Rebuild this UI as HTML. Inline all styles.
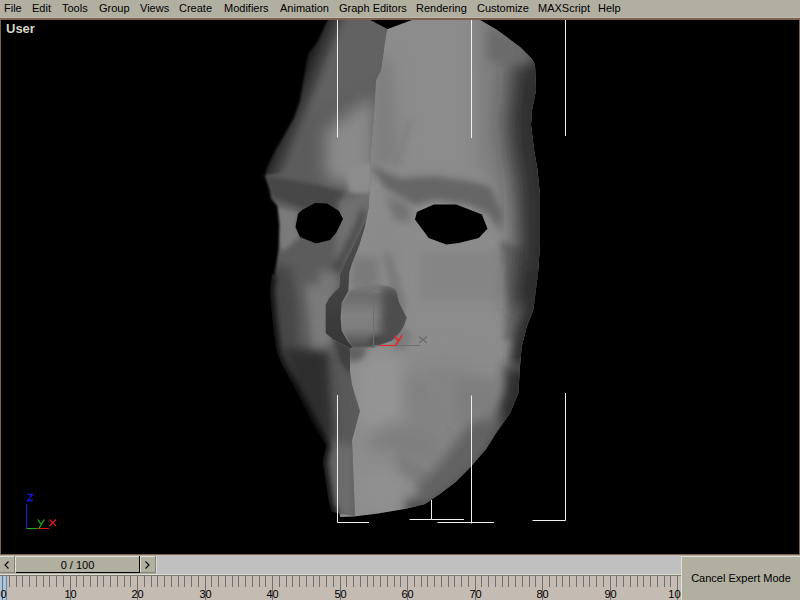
<!DOCTYPE html>
<html><head><meta charset="utf-8">
<style>
html,body{margin:0;padding:0;width:800px;height:600px;overflow:hidden;background:#000;}
body{position:relative;font-family:"Liberation Sans",sans-serif;font-size:11px;color:#000;}
.abs{position:absolute;}
#menu{left:0;top:0;width:800px;height:18px;background:#b1afa0;box-shadow:inset 0 -1px 0 #bdb8ab;}
#menu span{position:absolute;top:2px;font-size:11px;line-height:13px;white-space:nowrap;}
#vpborder{left:0;top:18px;width:800px;height:538px;background:#7c6050;}
#vp{left:1px;top:20px;width:798px;height:534px;background:#000;overflow:hidden;}
#user{left:5px;top:1px;font-weight:bold;font-size:13px;color:#d8d6c4;}
</style></head><body>
<div id="menu" class="abs">
<span style="left:4px">File</span>
<span style="left:32px">Edit</span>
<span style="left:62px">Tools</span>
<span style="left:99px">Group</span>
<span style="left:140px">Views</span>
<span style="left:179px">Create</span>
<span style="left:224px">Modifiers</span>
<span style="left:280px">Animation</span>
<span style="left:339px">Graph Editors</span>
<span style="left:416px">Rendering</span>
<span style="left:477px">Customize</span>
<span style="left:538px">MAXScript</span>
<span style="left:598px">Help</span>
</div>
<div id="vpborder" class="abs"></div>
<div id="vp" class="abs">
<div id="user" class="abs">User</div>
</div>
<svg class="abs" style="left:0;top:0" width="800" height="600" viewBox="0 0 800 600">
<defs>
<filter id="b1" filterUnits="userSpaceOnUse" x="0" y="0" width="800" height="600"><feGaussianBlur stdDeviation="1"/></filter>
<filter id="b2" filterUnits="userSpaceOnUse" x="0" y="0" width="800" height="600"><feGaussianBlur stdDeviation="2"/></filter>
<filter id="b3" filterUnits="userSpaceOnUse" x="0" y="0" width="800" height="600"><feGaussianBlur stdDeviation="3"/></filter>
<filter id="b4" filterUnits="userSpaceOnUse" x="0" y="0" width="800" height="600"><feGaussianBlur stdDeviation="4"/></filter>
<filter id="b5" filterUnits="userSpaceOnUse" x="0" y="0" width="800" height="600"><feGaussianBlur stdDeviation="5"/></filter>
<filter id="b6" filterUnits="userSpaceOnUse" x="0" y="0" width="800" height="600"><feGaussianBlur stdDeviation="6"/></filter>
<filter id="b8" filterUnits="userSpaceOnUse" x="0" y="0" width="800" height="600"><feGaussianBlur stdDeviation="8"/></filter>
<filter id="b10" filterUnits="userSpaceOnUse" x="0" y="0" width="800" height="600"><feGaussianBlur stdDeviation="10"/></filter>
<filter id="b12" filterUnits="userSpaceOnUse" x="0" y="0" width="800" height="600"><feGaussianBlur stdDeviation="12"/></filter>
<linearGradient id="gR" x1="0" x2="1" y1="0" y2="0"><stop offset="0" stop-color="#8c8c8c" stop-opacity="0"/><stop offset="0.3" stop-color="#7a7a7a" stop-opacity="0.6"/><stop offset="1" stop-color="#505050" stop-opacity="0.8"/></linearGradient>
<clipPath id="clipC"><path d="M387.7,29 L412,20 L480,20 L497,30 L520,47 L532,59 L535,65 L536,90 L532,110 L531,125 L534,150 L537.5,170 L540,195 L540,245 L538.3,270 L533.3,310 L526.7,326.7 L521.7,346.7 L520,366.7 L518.3,393.3 L510,413.3 L496,433 L486,449 L470,467.5 L455,482.5 L440,493.75 L425,504 L406,508.75 L378,513.5 L354,516.5 L340,517 L310,300 L360,30 Z"/></clipPath>
<clipPath id="clipL"><path d="M328,20 L370,20 L387,29 L385,42 L381,70 L376,80 L374,115 L371,150 L370,188 L367.5,212 L366.7,217.5 L353.9,245 L346.5,259.7 L340,274.4 L339.2,287.2 L333.7,292.8 L328.7,298.5 L325.4,305 L325.4,333 L333,339.7 L350,348.3 L350,360 L350,372 L352,385 L360,411 L352,440 L355,516 L337,513 L331,511 L328.7,501 L322.6,462 L326.3,445 L315,427 L309,415 L302,402 L296,390 L289,377 L282,365 L277,352 L275,340 L272,315 L270,290 L272,275 L276,250 L277,225 L275,207 L269,200 L267,190 L262,175 L264,167 L272,150 L282,133 L291,117 L297,100 L300,82 L304,60 L306,52 L315,40 Z"/></clipPath>
<clipPath id="clipN"><path d="M341.7,302.8 L348,294 L348.3,291 C360,284 385,282 396,290 L398.7,301.7 L406.7,317.7 L404,325.7 L400,332.3 L392,340.3 L373.3,347 L352.5,347.3 L348,341.8 L341.7,331 L340.6,318 Z"/></clipPath>
<clipPath id="clipLx"><path d="M200,20 L370,20 L387,29 L385,42 L381,70 L376,80 L374,115 L371,150 L370,188 L367.5,212 L366.7,217.5 L353.9,245 L346.5,259.7 L340,274.4 L339.2,287.2 L333.7,292.8 L328.7,298.5 L325.4,305 L325.4,333 L333,339.7 L350,348.3 L350,360 L350,372 L352,385 L360,411 L352,440 L355,516 L355,554 L200,554 Z"/></clipPath>
</defs>
<!-- central piece -->
<g clip-path="url(#clipC)">
<rect x="300" y="0" width="260" height="540" fill="#8c8c8c"/>
<g filter="url(#b12)">
<ellipse cx="445" cy="410" rx="45" ry="50" fill="#848484"/>
</g>
<linearGradient id="gV" x1="0" x2="0" y1="15" y2="240" gradientUnits="userSpaceOnUse"><stop offset="0" stop-color="#fff"/><stop offset="0.6" stop-color="#fff"/><stop offset="1" stop-color="#000"/></linearGradient>
<mask id="mV" maskUnits="userSpaceOnUse" x="0" y="0" width="800" height="600"><rect x="455" y="15" width="90" height="225" fill="url(#gV)"/></mask>
<rect x="455" y="15" width="90" height="225" fill="url(#gR)" mask="url(#mV)"/>
<g filter="url(#b8)">
<path d="M358,355 L400,355 L400,420 L360,430 Z" fill="#949494"/>
<path d="M405,372 L428,392 L422,425 L410,400 Z" fill="#808080"/>
<path d="M372,432 L400,424 L438,440 L436,466 L400,452 L368,448 Z" fill="#7e7e7e"/>
<ellipse cx="380" cy="490" rx="25" ry="20" fill="#909090"/>
<path d="M372,60 L392,60 L400,165 L372,175 Z" fill="#7e7e7e"/>
</g>
<g filter="url(#b5)">
<path d="M370,218 L392,224 L408,262 L370,262 Z" fill="#8a8a8a"/>
<path d="M385,195 L408,205 L412,222 L395,220 Z" fill="#707070"/>
<path d="M420,250 L500,250 L500,300 L420,300 Z" fill="#858585"/>
<path d="M397,449 L429,470 L429,492 L397,470 Z" fill="#7c7c7c"/>
</g>
<g filter="url(#b3)">
<path d="M408,120 L414,120 L396,172 L390,172 Z" fill="#808080"/>
<path d="M372,162 L400,169 L440,167 L480,172 L495,182 L470,178 L435,177 L400,179 Z" fill="#888888"/>
<path d="M370,165 L400,178 L435,176 L470,181 L490,187 L502,212 L500,232 L490,215 L470,205 L435,200 L415,205 L385,188 Z" fill="#666666"/>
<path d="M500,240 L526,250 L527,290 L520,340 L503,340 L508,300 Z" fill="#6a6a6a"/>
<path d="M400,325 L412,335 L405,350 L392,348 Z" fill="#7a7a7a"/>
<path d="M345,345 L368,347 L362,360 L348,362 Z" fill="#606060"/>
</g>
<path d="M532,59 L535,65 L536,90 L532,110 L531,125 L534,150 L537.5,170 L540,195 L540,245 L538.3,270 L533.3,310" fill="none" stroke="#2e2e2e" stroke-width="44" filter="url(#b10)"/>
<path d="M538.3,270 L533.3,310 L526.7,326.7 L521.7,346.7 L520,366.7" fill="none" stroke="#2e2e2e" stroke-width="20" filter="url(#b5)"/>
<path d="M520,366.7 L518.3,393.3 L510,413.3 L496,433" fill="none" stroke="#2e2e2e" stroke-width="30" filter="url(#b6)"/>
<path d="M500,425 L486,449 L470,467.5 L455,482.5 L440,493.75 L425,504 L406,508.75" fill="none" stroke="#505050" stroke-width="16" filter="url(#b5)"/>
<path d="M505,415 L470,470 L425,505 L415,490 L450,450 L478,412 Z" fill="#626262" filter="url(#b6)"/>
<path d="M455,378 L500,378 L495,420 L455,420 Z" fill="#7e7e7e" filter="url(#b6)"/>
<path d="M488,25 L520,45 L532,62 L488,62 Z" fill="#6a6a6a" filter="url(#b5)"/>
<path d="M352,255 L378,258 L380,290 L350,288 Z" fill="#7a7a7a" filter="url(#b4)"/>
<!-- nose -->
<linearGradient id="gN" x1="0" x2="0" y1="284" y2="348" gradientUnits="userSpaceOnUse"><stop offset="0" stop-color="#7a7a7a"/><stop offset="0.2" stop-color="#6c6c6c"/><stop offset="0.5" stop-color="#828282"/><stop offset="0.72" stop-color="#7a7a7a"/><stop offset="1" stop-color="#4a4a4a"/></linearGradient>
<linearGradient id="gNR" x1="375" x2="407" y1="0" y2="0" gradientUnits="userSpaceOnUse"><stop offset="0" stop-color="#555" stop-opacity="0"/><stop offset="1" stop-color="#4e4e4e" stop-opacity="1"/></linearGradient>
<g filter="url(#b3)">
<path d="M382,252 L392,255 L406,300 L403,320 L394,306 Z" fill="#7a7a7a"/>
</g>
<path d="M341.7,302.8 L348,294 L348.3,291 C360,284 385,282 396,290 L398.7,301.7 L406.7,317.7 L404,325.7 L400,332.3 L392,340.3 L373.3,347 L352.5,347.3 L348,341.8 L341.7,331 L340.6,318 Z" fill="url(#gN)" filter="url(#b1)"/>
<g clip-path="url(#clipN)"><ellipse cx="383" cy="341" rx="14" ry="6" fill="#484848" filter="url(#b2)"/><path d="M384,286 L404,292 L412,317.7 L408,330 L400,342 L384,352 L380,330 L382,305 Z" fill="#4e4e4e" filter="url(#b4)"/></g>
<linearGradient id="gB" x1="0" x2="0" y1="190" y2="348" gradientUnits="userSpaceOnUse"><stop offset="0" stop-color="#555"/><stop offset="0.5" stop-color="#474747"/><stop offset="1" stop-color="#363636"/></linearGradient>
<path d="M370,188 L367.5,212 L366.7,217.5 L353.9,245 L346.5,259.7 L340,274.4 L339.2,287.2 L333.7,292.8 L328.7,298.5 L325.4,305 L325.4,333 L333,339.7 L350,348.3 L352.5,347.3 L348,341.8 L341.7,331 L340.6,318 L341.7,302.8 L348.3,291 L349.3,272.6 L352,263.4 L359.4,245 L364.9,226.7 L368.5,208.3 L369.4,190 Z" fill="url(#gB)"/>
</g>
<!-- left piece -->
<g clip-path="url(#clipL)">
<rect x="250" y="0" width="150" height="540" fill="#5c5c5c"/>
<g filter="url(#b8)">
<path d="M320,10 L400,10 L390,75 L300,120 Z" fill="#626262"/>
<path d="M325,130 L374,95 L374,192 L325,178 Z" fill="#8a8a8a"/>
</g>
<linearGradient id="gTL" x1="299" y1="85" x2="323" y2="94.5" gradientUnits="userSpaceOnUse"><stop offset="0" stop-color="#222"/><stop offset="0.5" stop-color="#444"/><stop offset="1" stop-color="#666" stop-opacity="0"/></linearGradient>
<path d="M325,10 L370,10 L350,60 L335,110 L300,170 L262,176 L250,176 L250,10 Z" fill="url(#gTL)" filter="url(#b1)"/>
<g filter="url(#b2)">
<path d="M264,175 L318,185 L344,192 L340,214 L300,207 L270,196 Z" fill="#464646"/>
<path d="M345,168 L372,163 L372,196 L350,193 Z" fill="#8c8c8c"/>
<path d="M272,205 L298,212 L296,227 L300,237 L282,252 L275,225 Z" fill="#7a7a7a"/>
</g>
<g filter="url(#b3)">
<path d="M338,200 L372,192 L370,220 L355,250 L345,268 L335,258 Z" fill="#707070"/>
<path d="M366,217 L354,245 L346,260 L340,274 L332,270 L342,250 L355,225 L362,205 Z" fill="#4a4a4a"/>
<path d="M328,350 L350,352 L356,440 L336,432 Z" fill="#585858"/>
</g>
<g filter="url(#b5)">
<path d="M266,262 L291,268 L296,300 L299,345 L272,345 Z" fill="#464646"/>
<path d="M280,345 L328,352 L334,440 L310,440 Z" fill="#2e2e2e"/>
</g>
<g filter="url(#b4)">
<path d="M305,283 L334,290 L332,346 L312,348 Z" fill="#7a7a7a"/>
<path d="M320,270 L338,274 L338,292 L316,290 Z" fill="#777777"/>
<path d="M335,445 L355,445 L355,516 L335,516 Z" fill="#6c6c6c"/>
</g>
<path d="M333,338 L352,348 L351,375 L340,362 Z" fill="#404040" filter="url(#b2)"/>
</g>
<g clip-path="url(#clipLx)">
<path d="M331,5 L315,40 L306,52 L304,60 L300,82 L297,100 L291,117 L282,133 L272,150 L264,167 L262,175" fill="none" stroke="#000" stroke-width="6" filter="url(#b1)"/>
<path d="M262,175 L267,190 L269,200 L275,207 L277,225 L276,250 L272,275" fill="none" stroke="#000" stroke-width="5" filter="url(#b1)"/>
<path d="M272,275 L270,290 L272,315 L275,340 L277,352 L282,365 L289,377 L296,390 L302,402 L309,415 L315,427 L326.3,445 L322.6,462 L328.7,501 L331,511 L337,513" fill="none" stroke="#000" stroke-width="7" filter="url(#b3)"/>
</g>
<!-- eyes -->
<path d="M315,203 L327,203.5 L339,211 L343,219 L336,233 L330,240 L316,243.5 L300,237 L295.5,227 L298,214 L302,210 Z" fill="#000"/>
<path d="M416.9,211.9 L415,219.4 L428.75,238.1 L446.25,244.4 L458.75,243.1 L478.75,238.1 L487.5,228.75 L481.9,214.4 L456.25,204.4 L433.75,204.4 Z" fill="#000"/>
<!-- gizmo -->
<g stroke="#6e6e6e" stroke-width="1" fill="none">
<path d="M373.5,294 V345.5 H420"/>
</g>
<path d="M380,345.5 H396" stroke="#e02828" stroke-width="1.2"/>
<path d="M374.5,286 H380 L374.5,291.5 H380.5" stroke="#7a7a7a" stroke-width="1.1" fill="none"/>
<path d="M394.5,335.5 L398.3,341 M402,335.5 L398.3,341 L396,345" stroke="#e02828" stroke-width="1.7" fill="none"/>
<path d="M419,336.5 L427,343 M427,336.5 L419,343" stroke="#6a6a6a" stroke-width="1.3" fill="none"/>
<!-- white lines -->
<g stroke="#f0f0f0" stroke-width="1" fill="none">
<path d="M337.5,20 V137.5"/>
<path d="M471.5,20 V138"/>
<path d="M565.5,20 V136"/>
<path d="M337.5,395 V522.5 H369"/>
<path d="M471.5,395.5 V523.5"/>
<path d="M437.5,522.5 H494"/>
<path d="M431.5,500 V519.5"/>
<path d="M409.5,519.5 H464"/>
<path d="M565.5,393 V520.5 H532.5"/>
</g>
<!-- tripod -->
<path d="M26.5,504 V528.5" stroke="#1818e0" stroke-width="1" fill="none"/>
<path d="M26.5,528.5 H37.5" stroke="#18b018" stroke-width="1" fill="none"/>
<path d="M37.5,528.5 H49" stroke="#e01818" stroke-width="1" fill="none"/>
<path d="M27.5,494.5 H32.5 L27.5,500.5 H33" stroke="#1818e0" stroke-width="1.3" fill="none"/>
<path d="M37.8,519.5 L41.2,524.5 M44.5,519.5 L41.2,524.5 L39,528.5" stroke="#18b018" stroke-width="1.3" fill="none"/>
<path d="M49.5,519.5 L56,526 M56,519.5 L49.5,526" stroke="#e01818" stroke-width="1.3" fill="none"/>
</svg>

<svg class="abs" style="left:0;top:555px" width="800" height="45" viewBox="0 555 800 45" font-family="Liberation Sans" font-size="11">
<rect x="0" y="555" width="800" height="45" fill="#c4bcb2"/>
<rect x="0" y="555" width="15" height="19" fill="#b1afa0"/>
<rect x="0" y="556" width="14" height="1" fill="#e2e0d6"/>
<rect x="14" y="556" width="1" height="17" fill="#858272"/>
<rect x="0" y="572" width="15" height="1" fill="#858272"/>
<path d="M8.5,561.5 L5,565 L8.5,568.5" stroke="#000" stroke-width="1.1" fill="none"/>
<rect x="15" y="555" width="125" height="19" fill="#b1afa0"/>
<rect x="15" y="556" width="124" height="1" fill="#e2e0d6"/>
<rect x="15" y="556" width="1" height="16" fill="#e2e0d6"/>
<rect x="139" y="556" width="1" height="17" fill="#000"/>
<rect x="16" y="572" width="124" height="1" fill="#000"/>
<text x="77.5" y="569" text-anchor="middle" fill="#000">0 / 100</text>
<rect x="140" y="555" width="16" height="19" fill="#b1afa0"/>
<rect x="140" y="556" width="15" height="1" fill="#e2e0d6"/>
<rect x="140" y="556" width="1" height="16" fill="#e2e0d6"/>
<rect x="155" y="556" width="1" height="17" fill="#858272"/>
<rect x="140" y="572" width="16" height="1" fill="#858272"/>
<path d="M145.5,561.5 L149,565 L145.5,568.5" stroke="#000" stroke-width="1.1" fill="none"/>
<rect x="156" y="555" width="525" height="19" fill="#c0c0c0"/>
<rect x="156" y="556" width="1" height="17" fill="#dadada"/>
<rect x="0" y="574" width="681" height="1" fill="#dcdad4"/>
<rect x="0" y="575" width="681" height="1" fill="#7c7a6c"/>
<rect x="0" y="576" width="7" height="24" fill="#a9c6dc"/>
<rect x="6" y="576" width="1" height="24" fill="#6a8aa2"/>
<rect x="2.0" y="576" width="1" height="24" fill="#707070"/>
<rect x="9.0" y="576" width="1" height="11" fill="#707070"/>
<rect x="16.0" y="576" width="1" height="11" fill="#707070"/>
<rect x="22.0" y="576" width="1" height="11" fill="#707070"/>
<rect x="29.0" y="576" width="1" height="11" fill="#707070"/>
<rect x="36.0" y="576" width="1" height="11" fill="#707070"/>
<rect x="43.0" y="576" width="1" height="11" fill="#707070"/>
<rect x="49.0" y="576" width="1" height="11" fill="#707070"/>
<rect x="56.0" y="576" width="1" height="11" fill="#707070"/>
<rect x="63.0" y="576" width="1" height="11" fill="#707070"/>
<rect x="70.0" y="576" width="1" height="24" fill="#707070"/>
<text x="70.5" y="598" text-anchor="middle" fill="#000">10</text>
<rect x="76.0" y="576" width="1" height="11" fill="#707070"/>
<rect x="83.0" y="576" width="1" height="11" fill="#707070"/>
<rect x="90.0" y="576" width="1" height="11" fill="#707070"/>
<rect x="97.0" y="576" width="1" height="11" fill="#707070"/>
<rect x="103.0" y="576" width="1" height="11" fill="#707070"/>
<rect x="110.0" y="576" width="1" height="11" fill="#707070"/>
<rect x="117.0" y="576" width="1" height="11" fill="#707070"/>
<rect x="124.0" y="576" width="1" height="11" fill="#707070"/>
<rect x="130.0" y="576" width="1" height="11" fill="#707070"/>
<rect x="137.0" y="576" width="1" height="24" fill="#707070"/>
<text x="137.5" y="598" text-anchor="middle" fill="#000">20</text>
<rect x="144.0" y="576" width="1" height="11" fill="#707070"/>
<rect x="151.0" y="576" width="1" height="11" fill="#707070"/>
<rect x="157.0" y="576" width="1" height="11" fill="#707070"/>
<rect x="164.0" y="576" width="1" height="11" fill="#707070"/>
<rect x="171.0" y="576" width="1" height="11" fill="#707070"/>
<rect x="178.0" y="576" width="1" height="11" fill="#707070"/>
<rect x="184.0" y="576" width="1" height="11" fill="#707070"/>
<rect x="191.0" y="576" width="1" height="11" fill="#707070"/>
<rect x="198.0" y="576" width="1" height="11" fill="#707070"/>
<rect x="205.0" y="576" width="1" height="24" fill="#707070"/>
<text x="205.5" y="598" text-anchor="middle" fill="#000">30</text>
<rect x="211.0" y="576" width="1" height="11" fill="#707070"/>
<rect x="218.0" y="576" width="1" height="11" fill="#707070"/>
<rect x="225.0" y="576" width="1" height="11" fill="#707070"/>
<rect x="232.0" y="576" width="1" height="11" fill="#707070"/>
<rect x="238.0" y="576" width="1" height="11" fill="#707070"/>
<rect x="245.0" y="576" width="1" height="11" fill="#707070"/>
<rect x="252.0" y="576" width="1" height="11" fill="#707070"/>
<rect x="259.0" y="576" width="1" height="11" fill="#707070"/>
<rect x="265.0" y="576" width="1" height="11" fill="#707070"/>
<rect x="272.0" y="576" width="1" height="24" fill="#707070"/>
<text x="272.5" y="598" text-anchor="middle" fill="#000">40</text>
<rect x="279.0" y="576" width="1" height="11" fill="#707070"/>
<rect x="286.0" y="576" width="1" height="11" fill="#707070"/>
<rect x="292.0" y="576" width="1" height="11" fill="#707070"/>
<rect x="299.0" y="576" width="1" height="11" fill="#707070"/>
<rect x="306.0" y="576" width="1" height="11" fill="#707070"/>
<rect x="313.0" y="576" width="1" height="11" fill="#707070"/>
<rect x="319.0" y="576" width="1" height="11" fill="#707070"/>
<rect x="326.0" y="576" width="1" height="11" fill="#707070"/>
<rect x="333.0" y="576" width="1" height="11" fill="#707070"/>
<rect x="340.0" y="576" width="1" height="24" fill="#707070"/>
<text x="340.5" y="598" text-anchor="middle" fill="#000">50</text>
<rect x="346.0" y="576" width="1" height="11" fill="#707070"/>
<rect x="353.0" y="576" width="1" height="11" fill="#707070"/>
<rect x="360.0" y="576" width="1" height="11" fill="#707070"/>
<rect x="367.0" y="576" width="1" height="11" fill="#707070"/>
<rect x="373.0" y="576" width="1" height="11" fill="#707070"/>
<rect x="380.0" y="576" width="1" height="11" fill="#707070"/>
<rect x="387.0" y="576" width="1" height="11" fill="#707070"/>
<rect x="394.0" y="576" width="1" height="11" fill="#707070"/>
<rect x="400.0" y="576" width="1" height="11" fill="#707070"/>
<rect x="407.0" y="576" width="1" height="24" fill="#707070"/>
<text x="407.5" y="598" text-anchor="middle" fill="#000">60</text>
<rect x="414.0" y="576" width="1" height="11" fill="#707070"/>
<rect x="421.0" y="576" width="1" height="11" fill="#707070"/>
<rect x="427.0" y="576" width="1" height="11" fill="#707070"/>
<rect x="434.0" y="576" width="1" height="11" fill="#707070"/>
<rect x="441.0" y="576" width="1" height="11" fill="#707070"/>
<rect x="448.0" y="576" width="1" height="11" fill="#707070"/>
<rect x="454.0" y="576" width="1" height="11" fill="#707070"/>
<rect x="461.0" y="576" width="1" height="11" fill="#707070"/>
<rect x="468.0" y="576" width="1" height="11" fill="#707070"/>
<rect x="475.0" y="576" width="1" height="24" fill="#707070"/>
<text x="475.5" y="598" text-anchor="middle" fill="#000">70</text>
<rect x="481.0" y="576" width="1" height="11" fill="#707070"/>
<rect x="488.0" y="576" width="1" height="11" fill="#707070"/>
<rect x="495.0" y="576" width="1" height="11" fill="#707070"/>
<rect x="502.0" y="576" width="1" height="11" fill="#707070"/>
<rect x="508.0" y="576" width="1" height="11" fill="#707070"/>
<rect x="515.0" y="576" width="1" height="11" fill="#707070"/>
<rect x="522.0" y="576" width="1" height="11" fill="#707070"/>
<rect x="529.0" y="576" width="1" height="11" fill="#707070"/>
<rect x="535.0" y="576" width="1" height="11" fill="#707070"/>
<rect x="542.0" y="576" width="1" height="24" fill="#707070"/>
<text x="542.5" y="598" text-anchor="middle" fill="#000">80</text>
<rect x="549.0" y="576" width="1" height="11" fill="#707070"/>
<rect x="556.0" y="576" width="1" height="11" fill="#707070"/>
<rect x="562.0" y="576" width="1" height="11" fill="#707070"/>
<rect x="569.0" y="576" width="1" height="11" fill="#707070"/>
<rect x="576.0" y="576" width="1" height="11" fill="#707070"/>
<rect x="583.0" y="576" width="1" height="11" fill="#707070"/>
<rect x="589.0" y="576" width="1" height="11" fill="#707070"/>
<rect x="596.0" y="576" width="1" height="11" fill="#707070"/>
<rect x="603.0" y="576" width="1" height="11" fill="#707070"/>
<rect x="610.0" y="576" width="1" height="24" fill="#707070"/>
<text x="610.5" y="598" text-anchor="middle" fill="#000">90</text>
<rect x="616.0" y="576" width="1" height="11" fill="#707070"/>
<rect x="623.0" y="576" width="1" height="11" fill="#707070"/>
<rect x="630.0" y="576" width="1" height="11" fill="#707070"/>
<rect x="637.0" y="576" width="1" height="11" fill="#707070"/>
<rect x="643.0" y="576" width="1" height="11" fill="#707070"/>
<rect x="650.0" y="576" width="1" height="11" fill="#707070"/>
<rect x="657.0" y="576" width="1" height="11" fill="#707070"/>
<rect x="664.0" y="576" width="1" height="11" fill="#707070"/>
<rect x="670.0" y="576" width="1" height="11" fill="#707070"/>
<rect x="677.0" y="576" width="1" height="24" fill="#707070"/>
<text x="677.5" y="598" text-anchor="middle" fill="#000">100</text>
<text x="3.5" y="598" text-anchor="middle" fill="#000">0</text>
<rect x="681" y="555" width="119" height="45" fill="#b1afa0"/>
<rect x="681" y="556" width="119" height="1" fill="#e2e0d6"/>
<rect x="681" y="556" width="1" height="44" fill="#e2e0d6"/>
<text x="741" y="582" text-anchor="middle" fill="#000" font-size="11">Cancel Expert Mode</text>
</svg>
</body></html>
